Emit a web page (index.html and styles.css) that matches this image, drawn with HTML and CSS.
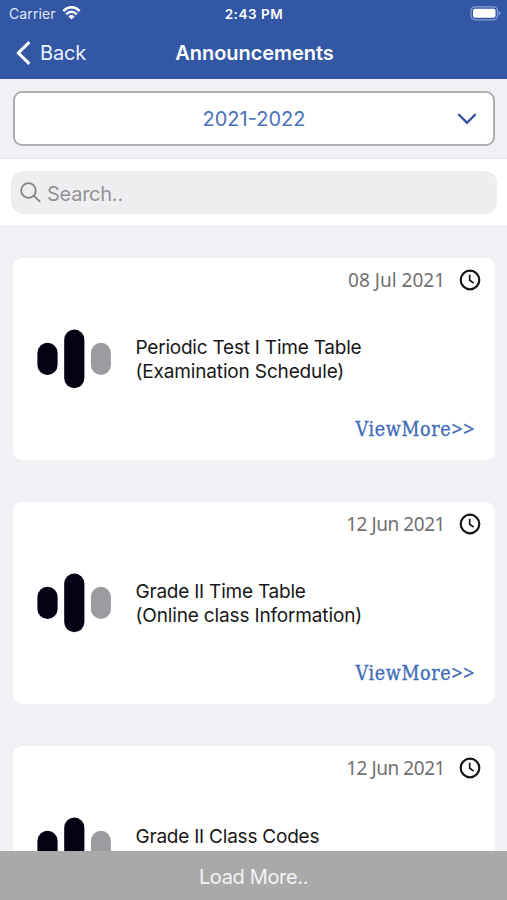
FILE: index.html
```html
<!DOCTYPE html>
<html lang="en">
<head>
<meta charset="utf-8">
<title>Announcements</title>
<link rel="stylesheet" href="styles.css">
</head>
<body>
<svg width="0" height="0" class="defs">
  <symbol id="clock" viewBox="0 0 22 22"><circle cx="11" cy="11" r="9.3" fill="none" stroke="#151515" stroke-width="2.2"/><path d="M10.7 5.8v5.5l4 2.8" fill="none" stroke="#151515" stroke-width="1.7"/></symbol>
  <symbol id="bars" viewBox="0 0 74 60"><rect x="0.4" y="13.7" width="20.2" height="32.3" rx="10.1" fill="#030212"/><rect x="27.2" y="0.6" width="20.2" height="58.6" rx="10.1" fill="#030212"/><rect x="53.9" y="13.7" width="20" height="32.3" rx="10" fill="#9c9b9f"/></symbol>
</svg>
<div class="screen">
  <header class="top">
    <div class="status">
      <div class="carrier"><span class="carrier-name">Carrier</span>
        <svg class="wifi" width="19" height="14" viewBox="0 0 18 14" fill="none" stroke="#fff" stroke-width="2.6"><path d="M.8 5Q9-2.6 17.2 5"/><path d="M3.7 8.2Q9 3.3 14.3 8.2"/><path d="M9 13.6 5.9 10.5Q9 7.7 12.1 10.5z" fill="#fff" stroke="none"/></svg>
      </div>
      <span class="time">2:43 PM</span>
      <svg class="battery" width="31" height="15" viewBox="0 0 31 15"><rect x="1" y=".8" width="26.5" height="13" rx="4" fill="none" stroke="#8b9fcf" stroke-width="1.2"/><rect x="3" y="2.8" width="22.5" height="9" rx="2" fill="#fff"/><path d="M28.7 5v4.6q1.8-.8 1.8-2.3T28.7 5" fill="#8b9fcf"/></svg>
    </div>
    <nav class="nav">
      <div class="back"><svg width="15" height="24" viewBox="0 0 15 24" fill="none" stroke="#fff" stroke-width="3"><path d="M14.4 1.2 3.3 12l11.1 10.8"/></svg><span class="back-label">Back</span></div>
      <h1 class="title">Announcements</h1>
    </nav>
  </header>
  <section class="year-bar">
    <div class="year"><span class="year-text">2021-2022</span><svg class="chevron" width="20" height="12" viewBox="0 0 20 12" fill="none" stroke="#2f519f" stroke-width="2.3" stroke-linecap="round"><path d="m2 1.8 8 8 8-8"/></svg></div>
  </section>
  <section class="search-bar">
    <div class="search"><svg width="21" height="21" viewBox="0 0 21 21" fill="none" stroke="#828286" stroke-width="1.7" stroke-linecap="round"><circle cx="8.5" cy="8.5" r="7.3"/><path d="m13.800 13.800 5.900 5.600"/></svg><span class="placeholder">Search..</span></div>
  </section>
  <main class="list">
    <article class="card">
      <div class="date-row"><time class="date">08 Jul 2021</time><svg class="clock"><use href="#clock"/></svg></div>
      <div class="body"><svg class="bars"><use href="#bars"/></svg><p class="text"><span class="tight">Periodic Test I Time Table</span><br>(Examination Schedule)</p></div>
      <div class="more">ViewMore<span class="arrows">&gt;&gt;</span></div>
    </article>
    <article class="card">
      <div class="date-row"><time class="date narrow">12 Jun 2021</time><svg class="clock"><use href="#clock"/></svg></div>
      <div class="body"><svg class="bars"><use href="#bars"/></svg><p class="text"><span class="tight">Grade II Time Table</span><br>(Online class Information)</p></div>
      <div class="more">ViewMore<span class="arrows">&gt;&gt;</span></div>
    </article>
    <article class="card">
      <div class="date-row"><time class="date narrow">12 Jun 2021</time><svg class="clock"><use href="#clock"/></svg></div>
      <div class="body"><svg class="bars"><use href="#bars"/></svg><p class="text"><span class="tight">Grade II Class Codes</span><br>(Online class Information)</p></div>
    </article>
  </main>
  <footer class="load"><span class="load-text">Load More..</span></footer>
</div>
</body>
</html>
```

FILE: styles.css
```css
* { box-sizing: border-box; }
body { margin: 0; font-family: Inter, "Liberation Sans", sans-serif; }
.defs { display: block; height: 0; }
svg { display: block; flex: none; }
.screen { width: 507px; height: 900px; overflow: hidden; display: flex; flex-direction: column; background: #f0f0f5; }
.top { height: 79px; flex: none; background: #3257a4; color: #fff; }
.status { height: 27px; display: grid; grid-template-columns: 1fr auto 1fr; align-items: center; padding: 0 6px 0 9px; }
.carrier { display: flex; align-items: center; gap: 6px; font-size: 14px; letter-spacing: .1px; color: #e1e8f8; }
.wifi { margin-top: -1px; }
.time { font-size: 13.5px; font-weight: 600; letter-spacing: .55px; margin-right: 2px; }
.battery { justify-self: end; }
.nav { height: 52px; display: grid; grid-template-columns: 1fr auto 1fr; align-items: center; padding: 0 15px; }
.back { display: flex; align-items: center; gap: 10px; font-size: 20px; letter-spacing: -.2px; color: #eaf0ff; }
.title { margin: 0 -1px 0 1px; font-size: 20px; font-weight: 600; letter-spacing: -.05px; }
.year-bar { height: 80px; flex: none; padding: 12px 12px 0 13px; border-bottom: 1px solid #e4e4e8; }
.year { height: 55px; display: grid; grid-template-columns: 1fr auto 1fr; align-items: center; border: 2px solid #aeaeb1; border-radius: 9px; background: #fff; padding: 0 16px; }
.year-text { grid-column: 2; font-size: 20px; color: #4a70b8; }
.chevron { justify-self: end; }
.search-bar { height: 68px; flex: none; padding: 12px 10px 0 11px; background: #fff; border-bottom: 1px solid #e6e6e9; }
.search { height: 43px; display: flex; align-items: center; gap: 6px; padding-left: 9px; border-radius: 12px; background: #eeeef0; color: #929296; font-size: 20px; letter-spacing: -.25px; }
.placeholder { margin-top: 2px; }
.list { flex: 1; min-height: 0; overflow: hidden; padding: 30.5px 12px 0 12.5px; }
.card { height: 202px; margin-bottom: 42.2px; border-radius: 9px; background: #fff; }
.date-row { height: 44px; display: flex; justify-content: flex-end; align-items: center; gap: 14px; padding-right: 14px; }
.date { font-family: "Noto Sans", sans-serif; font-size: 19px; color: #707070; }
.date.narrow { letter-spacing: -.45px; }
.body { height: 114px; display: flex; align-items: center; padding-left: 24px; gap: 25px; }
.clock { width: 22px; height: 22px; }
.bars { width: 74px; height: 60px; }
.text { margin: 2px 0 0; font-size: 19px; line-height: 23.2px; letter-spacing: -.15px; color: #171717; white-space: nowrap; }
.tight { letter-spacing: -.22px; }
.more { text-align: right; padding-right: 20px; font-family: "DejaVu Serif Condensed", "DejaVu Serif", serif; font-size: 19.5px; letter-spacing: .65px; line-height: 26px; color: #416cb8; -webkit-text-stroke: .3px #416cb8; }
.arrows { font-family: "Noto Sans", sans-serif; }
.load { height: 49px; flex: none; display: flex; align-items: center; justify-content: center; padding-top: 2px; background: #a9a9a9; color: #f4f4f4; font-size: 20px; letter-spacing: -.35px; }
```
